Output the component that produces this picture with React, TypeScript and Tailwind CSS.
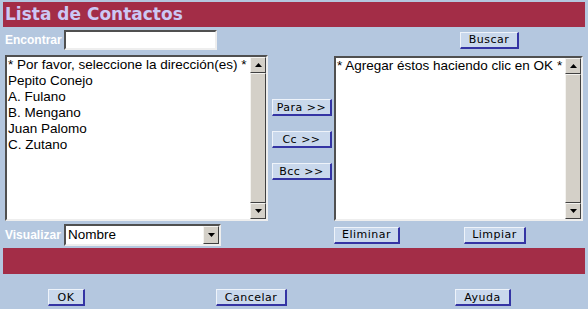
import React from 'react';

const btn =
  "bg-[#c9d8ec] border border-t-[#eef3fa] border-l-[#eef3fa] border-b-[#3434a4] border-r-[#3434a4] border-b-2 border-r-2 text-black text-[11px] font-['DejaVu_Sans',sans-serif] leading-none tracking-[0.5px] flex items-center justify-center";

const ArrowUp = () => (
  <svg width="7" height="4" viewBox="0 0 7 4"><path d="M3.5 0 L7 4 L0 4 Z" fill="#000" /></svg>
);
const ArrowDown = () => (
  <svg width="7" height="4" viewBox="0 0 7 4"><path d="M0 0 L7 0 L3.5 4 Z" fill="#000" /></svg>
);

const Raised: React.FC<{ className?: string; children?: React.ReactNode }> = ({ className = '', children }) => (
  <div className={`bg-[#d4d0c8] border border-t-[#f4f3f0] border-l-[#f4f3f0] border-b-[#404040] border-r-[#404040] flex items-center justify-center ${className}`}>
    {children}
  </div>
);

const Scrollbar = () => (
  <div className="w-[16px] h-full flex flex-col bg-[#e8e6e0]">
    <Raised className="h-[16px] shrink-0"><ArrowUp /></Raised>
    <Raised className="flex-1" />
    <Raised className="h-[16px] shrink-0"><ArrowDown /></Raised>
  </div>
);

const ListBox: React.FC<{ items: string[]; className?: string }> = ({ items, className = '' }) => (
  <div className={`bg-white border-2 border-t-[#505050] border-l-[#505050] border-b-[#eeeeee] border-r-[#eeeeee] flex ${className}`}>
    <div className="flex-1 pl-[1px] text-[13.5px] leading-[16px] text-black font-['Liberation_Sans',Arial,sans-serif] whitespace-nowrap overflow-hidden">
      {items.map((it) => (
        <div key={it}>{it}</div>
      ))}
    </div>
    <Scrollbar />
  </div>
);

export default function App() {
  return (
    <div className="w-[588px] h-[309px] bg-[#b4c7df] pt-[2px] px-[3px] overflow-hidden">
      <div className="h-[25px] bg-[#a32d47] flex items-center pl-[2px]">
        <span className="text-[17px] font-bold text-[#ccc8f4] font-['DejaVu_Sans',Verdana,sans-serif] leading-none">
          Lista de Contactos
        </span>
      </div>

      <div className="flex items-center h-[20px] mt-[3px]">
        <span className="ml-[2px] w-[59px] text-[12px] font-bold text-white font-['Liberation_Sans',Arial,sans-serif]">
          Encontrar
        </span>
        <input className="w-[153px] h-[20px] bg-white border-2 border-t-[#505050] border-l-[#505050] border-b-[#eeeeee] border-r-[#eeeeee] outline-none" />
        <button className={`${btn} ml-[243px] w-[59px] h-[17px]`}>Buscar</button>
      </div>

      <div className="flex mt-[5px] h-[166px]">
        <ListBox
          className="ml-[2px] w-[263px] h-[166px]"
          items={[
            '* Por favor, seleccione la dirección(es) *',
            'Pepito Conejo',
            'A. Fulano',
            'B. Mengano',
            'Juan Palomo',
            'C. Zutano',
          ]}
        />
        <div className="ml-[4px] w-[60px] flex flex-col gap-[15px] pt-[44px]">
          <button className={`${btn} h-[17px]`}>Para &gt;&gt;</button>
          <button className={`${btn} h-[17px]`}>Cc &gt;&gt;</button>
          <button className={`${btn} h-[17px]`}>Bcc &gt;&gt;</button>
        </div>
        <ListBox
          className="ml-[2px] mt-[1px] w-[249px] h-[165px]"
          items={['* Agregar éstos haciendo clic en OK *']}
        />
      </div>

      <div className="flex items-center h-[22px] mt-[3px]">
        <span className="ml-[2px] w-[59px] text-[12px] font-bold text-white font-['Liberation_Sans',Arial,sans-serif]">
          Visualizar
        </span>
        <div className="w-[157px] h-[22px] bg-white border-2 border-t-[#505050] border-l-[#505050] border-b-[#eeeeee] border-r-[#eeeeee] flex items-center">
          <span className="flex-1 pl-[2px] text-[13.5px] text-black font-['Liberation_Sans',Arial,sans-serif]">Nombre</span>
          <Raised className="w-[16px] h-[18px]"><ArrowDown /></Raised>
        </div>
        <button className={`${btn} ml-[113px] w-[66px] h-[17px]`}>Eliminar</button>
        <button className={`${btn} ml-[64px] w-[62px] h-[17px]`}>Limpiar</button>
      </div>

      <div className="h-[26px] bg-[#a32d47] mt-[2px]" />

      <div className="flex mt-[15px]">
        <button className={`${btn} ml-[45px] w-[37px] h-[17px]`}>OK</button>
        <button className={`${btn} ml-[131px] w-[71px] h-[17px]`}>Cancelar</button>
        <button className={`${btn} ml-[168px] w-[56px] h-[17px]`}>Ayuda</button>
      </div>
    </div>
  );
}
